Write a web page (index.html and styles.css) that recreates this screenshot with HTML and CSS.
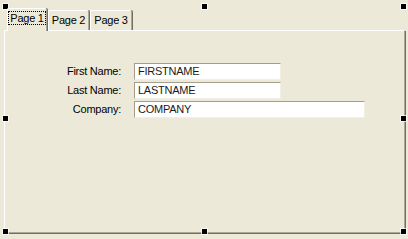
FILE: index.html
```html
<!DOCTYPE html>
<html>
<head>
<meta charset="utf-8">
<link rel="stylesheet" href="styles.css">
</head>
<body>
<div class="stage">
  <div class="tabctl">
    <div class="tabs">
      <div class="tab active t1"><span class="focus">Page 1</span></div>
      <div class="tab t2">Page 2</div>
      <div class="tab t3">Page 3</div>
    </div>
    <div class="panel">
      <div class="form">
        <label class="lbl">First Name:</label>
        <div class="field short">FIRSTNAME</div>
        <label class="lbl">Last Name:</label>
        <div class="field short">LASTNAME</div>
        <label class="lbl">Company:</label>
        <div class="field long">COMPANY</div>
      </div>
    </div>
  </div>
  <span class="handle h-tl"></span>
  <span class="handle h-tc"></span>
  <span class="handle h-tr"></span>
  <span class="handle h-ml"></span>
  <span class="handle h-mr"></span>
  <span class="handle h-bl"></span>
  <span class="handle h-bc"></span>
  <span class="handle h-br"></span>
</div>
</body>
</html>
```
FILE: styles.css
```css
html, body {
  margin: 0;
  padding: 0;
  background: #ece9d8;
}
body {
  font-family: "Liberation Sans", Arial, sans-serif;
  font-size: 11px;
  letter-spacing: -0.25px;
  color: #000;
}
.stage {
  position: relative;
  width: 408px;
  height: 239px;
  box-sizing: border-box;
  padding: 8px 3px 0 4px;
}
.tabctl {
  display: flex;
  flex-direction: column;
}
.tabs {
  display: flex;
  align-items: flex-end;
  height: 22px;
  padding-left: 3px;
}
.tab {
  box-sizing: border-box;
  height: 20px;
  line-height: 18px;
  text-align: center;
  background: #ece9d8;
  border-top: 1px solid #fff;
  border-left: 1px solid #fff;
  border-right: 1px solid #aca899;
  box-shadow: 1px 0 0 #716f64;
  border-radius: 2px 2px 0 0;
  margin-right: 1px;
}
.t1 { width: 40px; }
.t2 { width: 41px; }
.t3 { width: 42px; }
.tab.active {
  height: 23px;
  margin-bottom: -1px;
  position: relative;
  z-index: 1;
  padding-top: 2px;
  line-height: 14px;
}
.focus {
  display: inline-block;
  border: 1px dotted #000;
  padding: 0 1px;
  line-height: 12px;
  height: 12px;
}
.panel {
  box-sizing: border-box;
  height: 203px;
  background: #ece9d8;
  border-top: 1px solid #fff;
  border-left: 1px solid #fff;
  border-right: 1px solid #aca899;
  border-bottom: 1px solid #aca899;
  box-shadow: 1px 1px 0 #716f64;
}
.form {
  display: grid;
  grid-template-columns: 116px auto;
  column-gap: 13px;
  row-gap: 2px;
  justify-items: start;
  align-items: center;
  margin-top: 32px;
}
.lbl {
  justify-self: end;
  line-height: 17px;
}
.field {
  box-sizing: border-box;
  height: 17px;
  background: #fff;
  border-top: 1px solid #a29f8e;
  border-left: 1px solid #a29f8e;
  border-right: 1px solid #f1efe2;
  border-bottom: 1px solid #f1efe2;
  padding-left: 3px;
  line-height: 15px;
  color: #1a1a1a;
}
.short { width: 147px; }
.long { width: 231px; }
.handle {
  position: absolute;
  width: 5px;
  height: 5px;
  background: #000;
  outline: 1px solid rgba(255,255,255,0.7);
}
.h-tl { left: 3px; top: 4px; }
.h-tc { left: 202px; top: 4px; }
.h-tr { left: 401px; top: 4px; }
.h-ml { left: 3px; top: 116px; }
.h-mr { left: 401px; top: 116px; }
.h-bl { left: 3px; top: 229px; }
.h-bc { left: 202px; top: 229px; }
.h-br { left: 401px; top: 229px; }
```
